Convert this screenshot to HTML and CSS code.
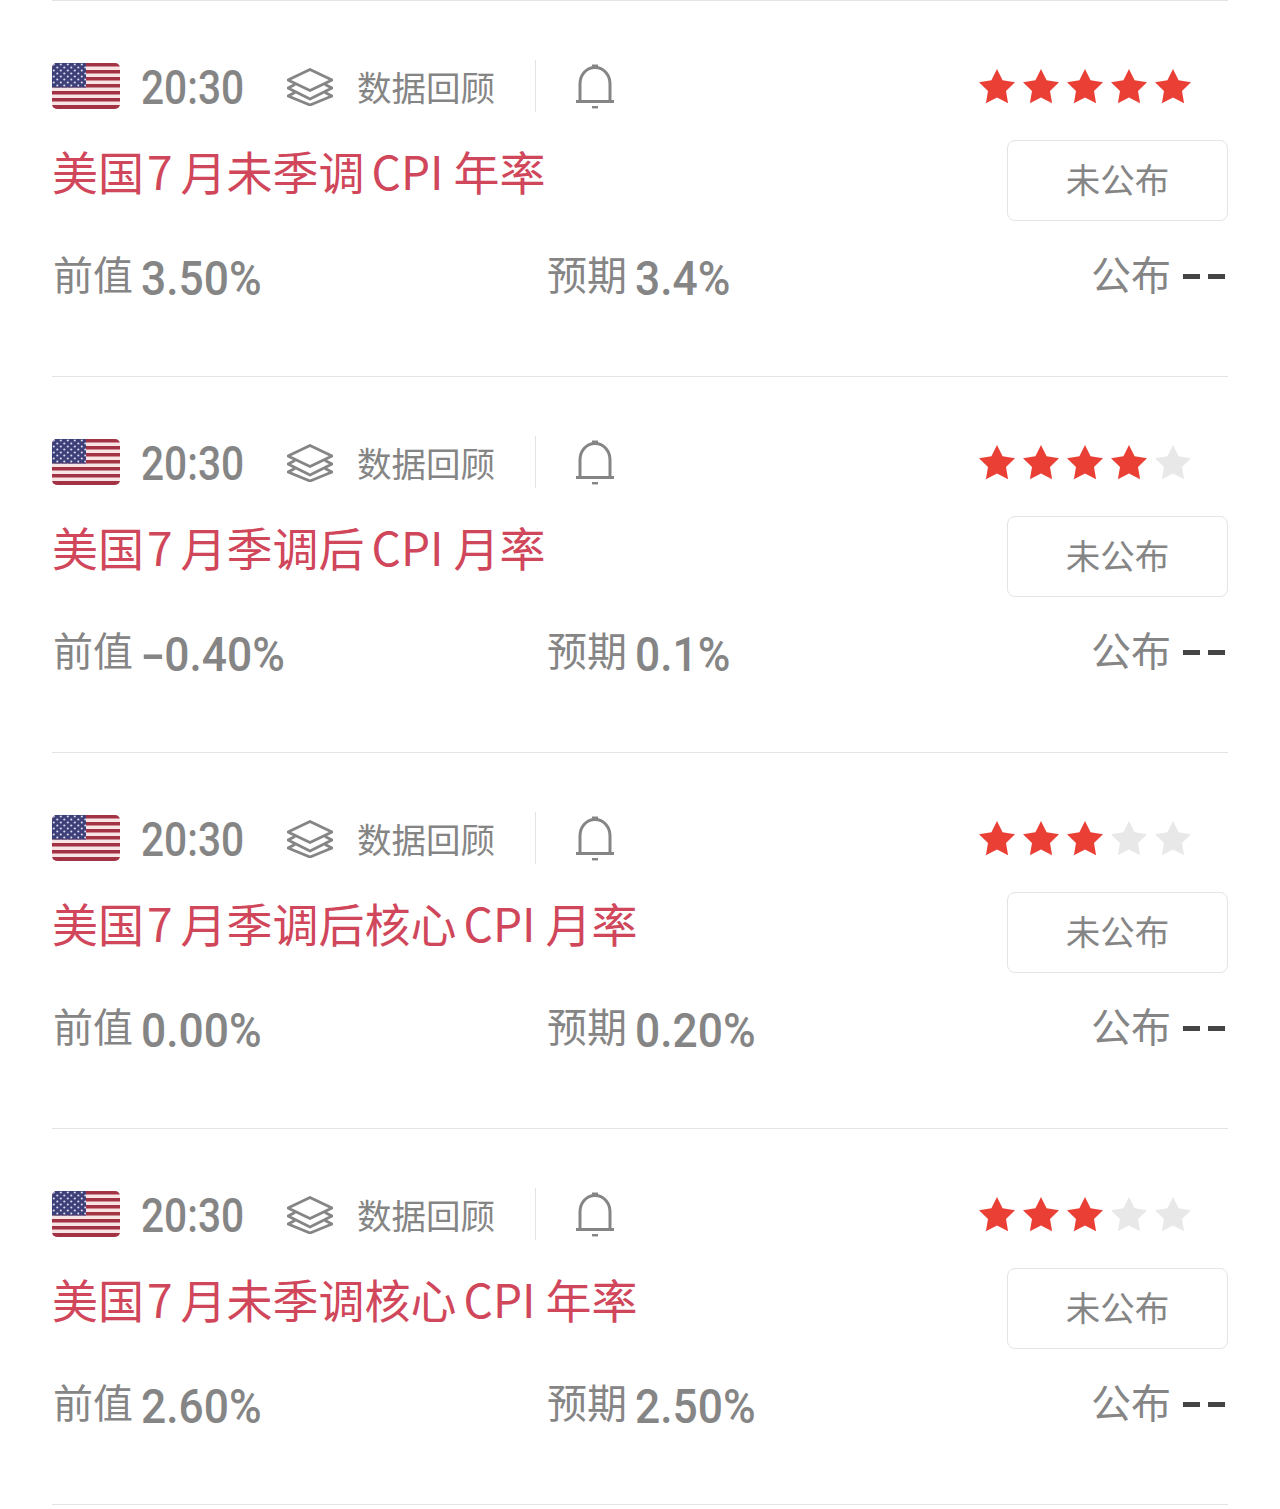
FILE: index.html
```html
<!DOCTYPE html>
<html lang="zh-CN">
<head>
    <meta charset="UTF-8">
    <title>财经日历</title>
    <link rel="stylesheet" href="styles.css">
</head>
<body>
    <svg class="defs" width="0" height="0">
        <defs>
            <pattern id="stars" width="7" height="6" patternUnits="userSpaceOnUse">
                <circle cx="1.8" cy="1.5" r="1.1" fill="#d9d9ee"/>
                <circle cx="5.3" cy="4.5" r="1.1" fill="#d9d9ee"/>
            </pattern>
            <symbol id="flag" viewBox="0 0 68 46">
                <rect width="68" height="46" fill="#f8e4e4"/>
                <rect y="0" width="68" height="3.5" fill="#a13345"/>
                <rect y="7" width="68" height="3.5" fill="#a13345"/>
                <rect y="14" width="68" height="3.5" fill="#a13345"/>
                <rect y="21" width="68" height="3.5" fill="#a13345"/>
                <rect y="28" width="68" height="3.5" fill="#a13345"/>
                <rect y="35" width="68" height="3.5" fill="#a13345"/>
                <rect y="42" width="68" height="4" fill="#a13345"/>
                <rect width="34" height="24.5" fill="#3c3f78"/>
                <rect width="34" height="24.5" fill="url(#stars)"/>
            </symbol>
            <symbol id="layers" viewBox="0 0 46 38">
                <path d="M23 1.5 45 12 23 22.500 1 12Z" fill="none" stroke="#858585" stroke-width="2.800" stroke-linejoin="round"/>
                <path d="M8 16.500 1 20 23 31 45 20 38 16.500" fill="none" stroke="#858585" stroke-width="2.800" stroke-linejoin="round"/>
                <path d="M8 24.500 1 28 23 37 45 28 38 24.500" fill="none" stroke="#858585" stroke-width="2.800" stroke-linejoin="round"/>
            </symbol>
            <symbol id="bell" viewBox="0 0 40 46">
                <path d="M5 38V21C5 11.500 11.500 4.500 20 4.500S35 11.500 35 21V38" fill="none" stroke="#858585" stroke-width="3"/>
                <path d="M1 38.500H39" stroke="#858585" stroke-width="3"/>
                <rect x="17" y="1.500" width="6" height="4" fill="#858585"/>
                <rect x="17" y="43" width="6" height="2.400" fill="#858585"/>
            </symbol>
            <symbol id="star" viewBox="0 0 36 36">
                <path d="M18 0 23.600 11.300 36 13.200 27 21.900 29.100 34.300 18 28.500 6.900 34.300 9 21.900 0 13.200 12.400 11.300Z"/>
            </symbol>
        </defs>
    </svg>

    <div class="list">
        <div class="item">
            <div class="top">
                <svg class="flag"><use href="#flag"/></svg>
                <span class="time"><span class="num">20:30</span></span>
                <svg class="layers"><use href="#layers"/></svg>
                <span class="review">数据回顾</span>
                <span class="divider"></span>
                <svg class="bell"><use href="#bell"/></svg>
                <div class="rating">
                    <svg class="on"><use href="#star"/></svg>
                    <svg class="on"><use href="#star"/></svg>
                    <svg class="on"><use href="#star"/></svg>
                    <svg class="on"><use href="#star"/></svg>
                    <svg class="on"><use href="#star"/></svg>
                </div>
            </div>
            <div class="middle">
                <h2 class="title">美国<span class="month">7</span>月未季调<span class="cpi">CPI</span>年率</h2>
                <div class="status">未公布</div>
            </div>
            <div class="stats">
                <div class="stat"><span class="label">前值</span><span class="val"><span class="num">3.50%</span></span></div>
                <div class="stat"><span class="label">预期</span><span class="val"><span class="num">3.4%</span></span></div>
                <div class="stat"><span class="label">公布</span><span class="dash"></span><span class="dash"></span></div>
            </div>
        </div>

        <div class="item">
            <div class="top">
                <svg class="flag"><use href="#flag"/></svg>
                <span class="time"><span class="num">20:30</span></span>
                <svg class="layers"><use href="#layers"/></svg>
                <span class="review">数据回顾</span>
                <span class="divider"></span>
                <svg class="bell"><use href="#bell"/></svg>
                <div class="rating">
                    <svg class="on"><use href="#star"/></svg>
                    <svg class="on"><use href="#star"/></svg>
                    <svg class="on"><use href="#star"/></svg>
                    <svg class="on"><use href="#star"/></svg>
                    <svg class="off"><use href="#star"/></svg>
                </div>
            </div>
            <div class="middle">
                <h2 class="title">美国<span class="month">7</span>月季调后<span class="cpi">CPI</span>月率</h2>
                <div class="status">未公布</div>
            </div>
            <div class="stats">
                <div class="stat"><span class="label">前值</span><span class="val"><span class="num"><span class="neg">-</span>0.40%</span></span></div>
                <div class="stat"><span class="label">预期</span><span class="val"><span class="num">0.1%</span></span></div>
                <div class="stat"><span class="label">公布</span><span class="dash"></span><span class="dash"></span></div>
            </div>
        </div>

        <div class="item">
            <div class="top">
                <svg class="flag"><use href="#flag"/></svg>
                <span class="time"><span class="num">20:30</span></span>
                <svg class="layers"><use href="#layers"/></svg>
                <span class="review">数据回顾</span>
                <span class="divider"></span>
                <svg class="bell"><use href="#bell"/></svg>
                <div class="rating">
                    <svg class="on"><use href="#star"/></svg>
                    <svg class="on"><use href="#star"/></svg>
                    <svg class="on"><use href="#star"/></svg>
                    <svg class="off"><use href="#star"/></svg>
                    <svg class="off"><use href="#star"/></svg>
                </div>
            </div>
            <div class="middle">
                <h2 class="title">美国<span class="month">7</span>月季调后核心<span class="cpi">CPI</span>月率</h2>
                <div class="status">未公布</div>
            </div>
            <div class="stats">
                <div class="stat"><span class="label">前值</span><span class="val"><span class="num">0.00%</span></span></div>
                <div class="stat"><span class="label">预期</span><span class="val"><span class="num">0.20%</span></span></div>
                <div class="stat"><span class="label">公布</span><span class="dash"></span><span class="dash"></span></div>
            </div>
        </div>

        <div class="item">
            <div class="top">
                <svg class="flag"><use href="#flag"/></svg>
                <span class="time"><span class="num">20:30</span></span>
                <svg class="layers"><use href="#layers"/></svg>
                <span class="review">数据回顾</span>
                <span class="divider"></span>
                <svg class="bell"><use href="#bell"/></svg>
                <div class="rating">
                    <svg class="on"><use href="#star"/></svg>
                    <svg class="on"><use href="#star"/></svg>
                    <svg class="on"><use href="#star"/></svg>
                    <svg class="off"><use href="#star"/></svg>
                    <svg class="off"><use href="#star"/></svg>
                </div>
            </div>
            <div class="middle">
                <h2 class="title">美国<span class="month">7</span>月未季调核心<span class="cpi">CPI</span>年率</h2>
                <div class="status">未公布</div>
            </div>
            <div class="stats">
                <div class="stat"><span class="label">前值</span><span class="val"><span class="num">2.60%</span></span></div>
                <div class="stat"><span class="label">预期</span><span class="val"><span class="num">2.50%</span></span></div>
                <div class="stat"><span class="label">公布</span><span class="dash"></span><span class="dash"></span></div>
            </div>
        </div>
    </div>
</body>
</html>
```

FILE: styles.css
```css
body {
    margin: 0;
    background-color: #fff;
    font-family: "Noto Sans CJK SC", "Noto Sans", sans-serif;
    color: #858585;
}

.defs {
    display: block;
    height: 0;
}

.list {
    margin: 0 52px;
    border-top: 1px solid #e4e4e4;
}

.item {
    height: 376px;
    box-sizing: border-box;
    border-bottom: 1px solid #e4e4e4;
    padding-top: 59px;
}

.top {
    display: flex;
    align-items: center;
    height: 52px;
}

.flag {
    width: 68px;
    height: 46px;
    border-radius: 5px;
}

/* the numbers in the shot are a narrow DIN style, so squeeze Roboto */
.num {
    display: inline-block;
    font-family: "Roboto", sans-serif;
    font-weight: 500;
    font-size: 49px;
    line-height: 52px;
    transform: scaleX(0.83);
    transform-origin: left center;
    white-space: nowrap;
}

.neg {
    display: inline-block;
    margin-right: 9px;
    transform: scaleX(1.6);
    transform-origin: left center;
}

.time {
    width: 103px;
    margin-left: 21px;
    margin-top: 4px;
}

.layers {
    width: 46px;
    height: 38px;
    margin-left: 43px;
    margin-top: 2px;
}

.review {
    width: 138px;
    margin-left: 24px;
    font-size: 34.5px;
    line-height: 52px;
}

.divider {
    width: 1px;
    height: 52px;
    margin-left: 40px;
    background-color: #e4e4e4;
}

.bell {
    width: 40px;
    height: 46px;
    margin-left: 39px;
    margin-top: 0;
}

.rating {
    display: flex;
    gap: 8px;
    margin-left: auto;
    margin-right: 37px;
    margin-top: 2px;
}

.rating svg {
    width: 36px;
    height: 36px;
}

.rating .on {
    fill: #ea3f35;
}

.rating .off {
    fill: #e8e8e8;
}

.middle {
    display: flex;
    justify-content: space-between;
    align-items: flex-start;
    margin-top: 28px;
}

.title {
    margin: -3px 0 0;
    font-size: 46px;
    font-weight: 400;
    line-height: 66px;
    color: #d0465a;
}

.month {
    margin: 0 8px 0 3px;
}

.cpi {
    margin: 0 10px 0 7px;
}

.status {
    width: 219px;
    height: 79px;
    border: 1px solid #e4e4e4;
    border-radius: 8px;
    font-size: 34.5px;
    line-height: 75px;
    text-align: center;
}

.stats {
    display: grid;
    grid-template-columns: 494px 1fr auto;
    align-items: center;
    margin-top: 22px;
    height: 60px;
}

.stat {
    display: flex;
    align-items: center;
}

.label {
    font-size: 40px;
    line-height: 60px;
    margin: -3px 0 0 1px;
}

.val {
    margin-left: 8px;
    margin-top: 10px;
}

.val .num {
    transform: scaleX(0.905);
}

.dash {
    width: 17px;
    height: 5px;
    background-color: #444;
    margin: 4px 3px 0 8px;
}

.label + .dash {
    margin: 4px 0 0 12px;
}
```
